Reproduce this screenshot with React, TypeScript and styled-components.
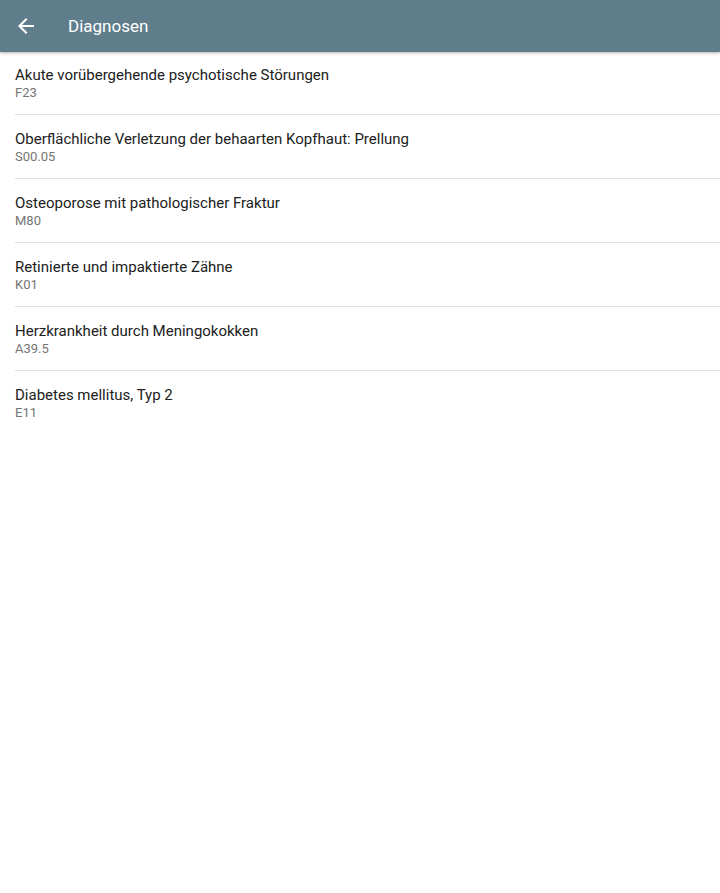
import React from 'react'
import styled, { createGlobalStyle } from 'styled-components'

const diagnoses = [
    { name: 'Akute vorübergehende psychotische Störungen', code: 'F23' },
    { name: 'Oberflächliche Verletzung der behaarten Kopfhaut: Prellung', code: 'S00.05' },
    { name: 'Osteoporose mit pathologischer Fraktur', code: 'M80' },
    { name: 'Retinierte und impaktierte Zähne', code: 'K01' },
    { name: 'Herzkrankheit durch Meningokokken', code: 'A39.5' },
    { name: 'Diabetes mellitus, Typ 2', code: 'E11' },
]

export default function App() {
    return (
        <>
            <GlobalStyle />
            <Page>
                <Toolbar>
                    <BackButton aria-label="Zurück">
                        <svg width="24" height="24" viewBox="0 0 24 24">
                            <path fill="#fff" d="M20 11H7.83l5.59-5.59L12 4l-8 8 8 8 1.41-1.41L7.83 13H20v-2z" />
                        </svg>
                    </BackButton>
                    <Title>Diagnosen</Title>
                </Toolbar>
                <List>
                    {diagnoses.map((d) => (
                        <Item key={d.code}>
                            <Name>{d.name}</Name>
                            <Code>{d.code}</Code>
                        </Item>
                    ))}
                </List>
            </Page>
        </>
    )
}

const GlobalStyle = createGlobalStyle`
    body {
        margin: 0;
        font-family: Roboto, "Noto Sans", sans-serif;
        background: #ffffff;
    }
`

const Page = styled.div`
    min-height: 893px;
    background: #ffffff;
`

const Toolbar = styled.header`
    height: 52px;
    background-color: #607d8b;
    display: flex;
    align-items: center;
    box-shadow: 0 1px 3px rgba(0, 0, 0, 0.3);
    position: relative;
`

const BackButton = styled.button`
    background: none;
    border: none;
    padding: 0;
    margin-left: 14px;
    margin-top: -1px;
    width: 24px;
    height: 24px;
    display: flex;
    cursor: pointer;
`

const Title = styled.h1`
    margin: -1px 0 0 30px;
    font-size: 17px;
    font-weight: 400;
    color: #ffffff;
`

const List = styled.ul`
    list-style: none;
    margin: -1px 0 0;
    padding: 0;
`

const Item = styled.li`
    height: 63px;
    padding-left: 15px;
    display: flex;
    flex-direction: column;
    justify-content: center;
    position: relative;

    &:not(:last-child)::after {
        content: '';
        position: absolute;
        left: 15px;
        right: 0;
        bottom: -1px;
        height: 1px;
        background: #e0e0e0;
    }

    & + & {
        margin-top: 1px;
    }
`

const Name = styled.div`
    font-size: 15px;
    line-height: 20px;
    color: #212121;
`

const Code = styled.div`
    font-size: 13px;
    line-height: 16px;
    color: #757575;
`
